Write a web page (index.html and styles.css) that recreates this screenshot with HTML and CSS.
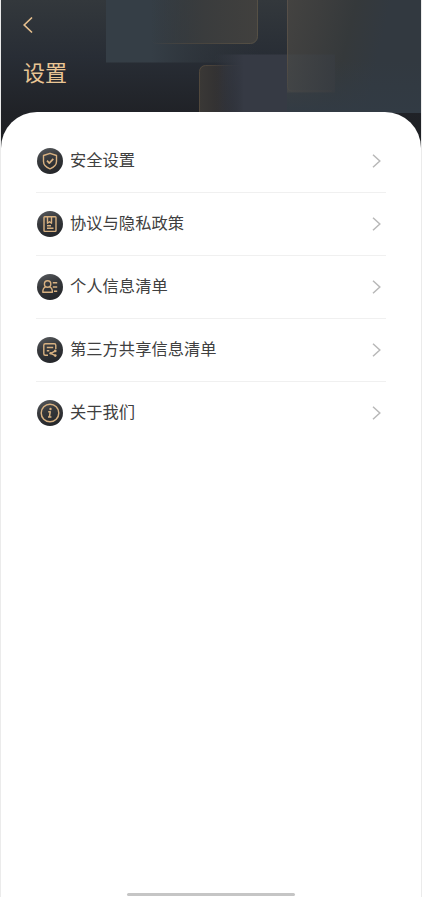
FILE: index.html
```html
<!DOCTYPE html>
<html lang="zh-CN">
<head>
<meta charset="utf-8">
<title>设置</title>
<link rel="stylesheet" href="styles.css">
</head>
<body>
<div class="screen">
  <header class="header">
    <svg class="pattern" viewBox="1 0 420 150" width="420" height="150" aria-hidden="true">
      <defs>
        <linearGradient id="slate"><stop offset="0" stop-color="#353e46"/><stop offset=".3" stop-color="#353e46"/><stop offset=".75" stop-color="#2f353b" stop-opacity=".5"/><stop offset="1" stop-color="#2f353b" stop-opacity="0"/></linearGradient>
        <linearGradient id="bronze"><stop offset="0" stop-color="#383d40" stop-opacity="0"/><stop offset=".5" stop-color="#3a3c3d"/><stop offset="1" stop-color="#41403e"/></linearGradient>
        <linearGradient id="edge"><stop offset="0" stop-color="#5c5144" stop-opacity="0"/><stop offset=".5" stop-color="#48443e"/><stop offset="1" stop-color="#565045"/></linearGradient>
        <linearGradient id="large" x1="0" y1="0" x2="1" y2=".2"><stop offset="0" stop-color="#444341"/><stop offset=".25" stop-color="#3d3e3e"/><stop offset=".5" stop-color="#35393b"/><stop offset=".75" stop-color="#323940"/><stop offset="1" stop-color="#323940"/></linearGradient>
        <linearGradient id="small"><stop offset="0" stop-color="#3a3836"/><stop offset=".35" stop-color="#323132"/><stop offset=".75" stop-color="#343740" stop-opacity="0"/></linearGradient>
        <linearGradient id="smallEdge"><stop offset="0" stop-color="#51483d"/><stop offset=".8" stop-color="#51483d" stop-opacity="0"/></linearGradient>
        <linearGradient id="veil"><stop offset="0" stop-color="#363a44" stop-opacity="0"/><stop offset=".4" stop-color="#363a44"/><stop offset="1" stop-color="#363a44"/></linearGradient>
        <linearGradient id="glass"><stop offset="0" stop-color="#444647"/><stop offset="1" stop-color="#383c41"/></linearGradient>
        <linearGradient id="base" x1="0" y1="0" x2="0" y2="1"><stop offset="0" stop-color="#323b44" stop-opacity="0"/><stop offset="1" stop-color="#323b44"/></linearGradient>
        <linearGradient id="largeEdge" gradientUnits="userSpaceOnUse" x1="287" y1="0" x2="310" y2="91"><stop offset="0" stop-color="#57504a"/><stop offset=".6" stop-color="#554e45"/><stop offset="1" stop-color="#554e45" stop-opacity=".15"/></linearGradient>
      </defs>
      <rect x="106" y="-1" width="152" height="63.5" fill="url(#slate)"/>
      <rect x="150" y="-10" width="107.5" height="53.5" rx="7" fill="url(#bronze)" stroke="url(#edge)"/>
      <rect x="199.500" y="65.500" width="56" height="80" rx="6" fill="url(#small)" stroke="url(#smallEdge)"/>
      <rect x="287" y="0" width="134" height="113" fill="url(#large)"/>
      <rect x="215" y="54.500" width="72" height="65" fill="url(#veil)"/>
      <rect x="287" y="60" width="134" height="53" fill="url(#base)"/>
      <rect x="287" y="54.500" width="48" height="38" fill="url(#glass)" opacity=".85"/>
      <path d="M287.500 0V87q0 4 4 4h40" fill="none" stroke="url(#largeEdge)"/>
    </svg>
    <button class="back" type="button" aria-label="返回"><svg viewBox="0 0 10 16"><path d="M8.500 1 1.200 8l7.300 7"/></svg></button>
    <h1 class="title">设置</h1>
  </header>
  <main class="panel">
    <ul class="menu">
      <li class="item">
        <span class="badge"><svg viewBox="0 0 26 26"><path d="M13 5.300 19.500 7.500v6c0 3.200-2.700 5.800-6.500 7.300-3.800-1.500-6.500-4.100-6.500-7.300v-6z"/><path d="m10 12.700 2.300 2.400 4-4.300" stroke-width="1.700"/></svg></span>
        <span class="label">安全设置</span><svg class="arrow" viewBox="0 0 9 14"><path d="m1 .8 6.800 6.200L1 13.200"/></svg>
      </li>
      <li class="item">
        <span class="badge"><svg viewBox="0 0 26 26"><rect x="7" y="5.800" width="12" height="14.600" rx=".8"/><path d="M10.500 6v6.200l2-1.500 2 1.500V6M10 14.700h4M10 17.300h6.500"/></svg></span>
        <span class="label">协议与隐私政策</span><svg class="arrow" viewBox="0 0 9 14"><path d="m1 .8 6.800 6.200L1 13.200"/></svg>
      </li>
      <li class="item">
        <span class="badge"><svg viewBox="0 0 26 26"><circle cx="10.600" cy="10" r="3.200"/><path d="M8.800 12.700c-2 .8-3 2.500-3 5.500h9.600c0-3-1-4.700-3-5.500M15.800 8.800h4.400M15.800 13h4.400M17 17.200h3.200"/></svg></span>
        <span class="label">个人信息清单</span><svg class="arrow" viewBox="0 0 9 14"><path d="m1 .8 6.800 6.200L1 13.200"/></svg>
      </li>
      <li class="item">
        <span class="badge"><svg viewBox="0 0 26 26"><path d="M18.800 12V8.300q0-1.500-1.500-1.500H8.300Q6.800 6.800 6.800 8.300v8.400q0 1.500 1.500 1.500H11M9.800 10.500h6.400M9.800 13.700h2.500M18.300 14l-4.600 2.300 4.600 2.400"/><g class="dots"><circle cx="18.300" cy="13.900" r="1.300"/><circle cx="13.700" cy="16.300" r="1.300"/><circle cx="18.300" cy="18.600" r="1.300"/></g></svg></span>
        <span class="label">第三方共享信息清单</span><svg class="arrow" viewBox="0 0 9 14"><path d="m1 .8 6.800 6.200L1 13.200"/></svg>
      </li>
      <li class="item">
        <span class="badge"><svg viewBox="0 0 26 26"><circle cx="13" cy="13" r="8.800" stroke-width="1.500"/><circle class="dots" cx="13.500" cy="9" r="1.200"/><path d="M11.200 11.800h2l-.8 5.200h2M11 17h1.400" stroke-width="1.500"/></svg></span>
        <span class="label">关于我们</span><svg class="arrow" viewBox="0 0 9 14"><path d="m1 .8 6.800 6.200L1 13.200"/></svg>
      </li>
    </ul>
    <div class="home-bar"></div>
  </main>
</div>
</body>
</html>
```
FILE: styles.css
```css
* { box-sizing: border-box; }
body {
  margin: 0;
  background: #fff;
  font-family: "Noto Sans CJK SC", sans-serif;
}
.screen {
  position: relative;
  display: flex;
  flex-direction: column;
  height: 897px;
  overflow: hidden;
  border: solid #ebebeb;
  border-width: 0 1px;
  background: linear-gradient(#33383c 0, #282d35 57px, #202227 112px, #1d1f22 150px, #fff 150px);
}
.header {
  height: 111.5px;
  padding: 17px 22px 0;
}
.pattern {
  position: absolute;
  top: 0;
  left: 0;
}
.back {
  position: relative;
  display: block;
  width: 10px;
  height: 16px;
  padding: 0;
  border: 0;
  background: none;
}
.back svg {
  display: block;
  width: 10px;
  height: 16px;
}
.back path {
  fill: none;
  stroke: #e5bf8e;
  stroke-width: 1.7;
  stroke-linecap: round;
}
.title {
  position: relative;
  margin: 22px 0 0;
  color: #e9c594;
  font-size: 22px;
  font-weight: 400;
  line-height: 32px;
}
.panel {
  position: relative;
  display: flex;
  flex: 1;
  flex-direction: column;
  justify-content: space-between;
  padding: 18.5px 35px 1px;
  border-radius: 36px 36px 0 0;
  background: #fff;
}
.menu {
  margin: 0;
  padding: 0;
  list-style: none;
}
.item {
  display: flex;
  align-items: center;
  height: 63.1px;
  padding: 0 5px 1px 1px;
  border-bottom: 1px solid #f0f0f0;
}
.item:last-child { border-bottom-color: transparent; }
.badge {
  width: 26px;
  height: 26px;
  margin-right: 7px;
  border-radius: 50%;
  background: linear-gradient(160deg, #5a5d61, #37393c 40%, #202226);
}
.badge svg {
  display: block;
  fill: none;
  stroke: #d8b181;
  stroke-width: 1.4;
  stroke-linejoin: round;
}
.badge .dots {
  fill: #d8b181;
  stroke: none;
}
.label {
  flex: 1;
  color: #404040;
  font-size: 16.3px;
  line-height: 24px;
  transform: translateY(-2px);
}
.arrow {
  width: 9px;
  height: 14px;
  fill: none;
  stroke: #b8b8b8;
  stroke-width: 1.5;
}
.home-bar {
  align-self: center;
  width: 168px;
  height: 3px;
  border-radius: 2px;
  background: #c5c5c5;
}
```
